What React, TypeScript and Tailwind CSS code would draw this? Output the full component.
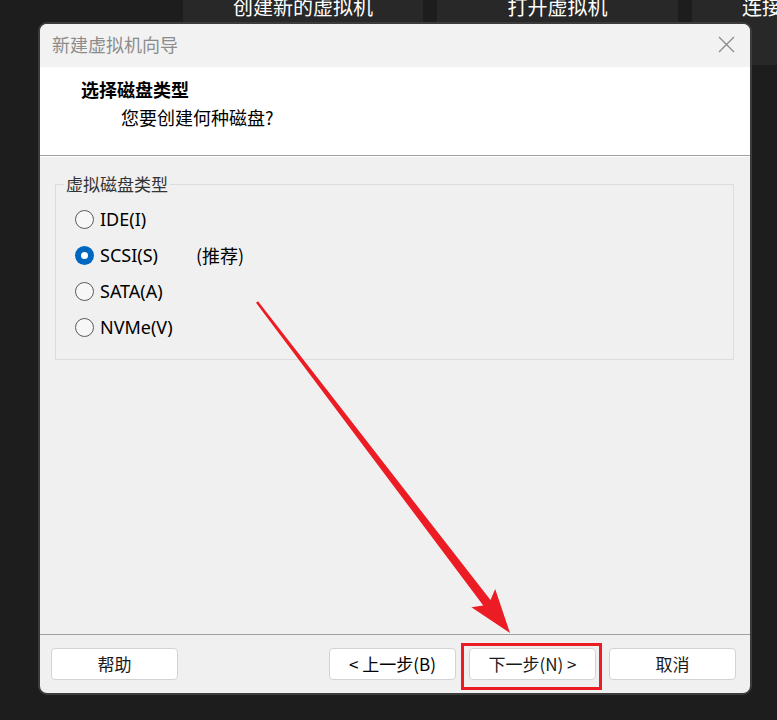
import React from "react";

const cjk = { fontFamily: '"Noto Sans CJK SC", "Noto Sans", sans-serif' };
const ui = { fontFamily: '"Noto Sans", "Noto Sans CJK SC", sans-serif' };

function Radio({ checked, label, extra }: { checked?: boolean; label: string; extra?: string }) {
  return (
    <div className="flex items-center h-[36px]">
      {checked ? (
        <div className="w-[19px] h-[19px] rounded-full bg-[#0067c0] flex items-center justify-center shrink-0">
          <div className="w-[7px] h-[7px] rounded-full bg-white" />
        </div>
      ) : (
        <div className="w-[19px] h-[19px] rounded-full border border-[#5a5a5a] bg-[#f7f7f7] shrink-0" />
      )}
      <span className="ml-[6px] text-[18px] text-black leading-none" style={ui}>{label}</span>
      {extra && (
        <span className="ml-[38px] text-[18px] text-black leading-none" style={cjk}>{extra}</span>
      )}
    </div>
  );
}

function Btn({ children }: { children: React.ReactNode }) {
  return (
    <div
      className="w-[127px] h-[32px] bg-white border border-[#d3d3d3] rounded-[4px] flex items-center justify-center text-[17px] text-[#1a1a1a] shrink-0"
      style={cjk}
    >
      {children}
    </div>
  );
}

export default function App() {
  const sx = 257, sy = 302, ex = 510, ey = 633;
  const dx = ex - sx, dy = ey - sy;
  const len = Math.sqrt(dx * dx + dy * dy);
  const ux = dx / len, uy = dy / len;
  const px = uy, py = -ux;
  const headLen = 44, headW = 15;
  const bx = ex - ux * headLen, by = ey - uy * headLen;
  const shaftEndW = 4.5, shaftStartW = 1.2;
  const pts = [
    [sx + px * shaftStartW, sy + py * shaftStartW],
    [bx + px * shaftEndW + ux * 6, by + py * shaftEndW + uy * 6],
    [bx + px * headW, by + py * headW],
    [ex, ey],
    [bx - px * headW, by - py * headW],
    [bx - px * shaftEndW + ux * 6, by - py * shaftEndW + uy * 6],
    [sx - px * shaftStartW, sy - py * shaftStartW],
  ]
    .map((p) => p.map((v) => v.toFixed(1)).join(","))
    .join(" ");

  return (
    <div className="relative w-[777px] h-[720px] bg-[#1d1d1d] overflow-hidden">
      {/* desktop tiles */}
      <div className="flex h-[65px] pl-[183px] gap-[14px] overflow-hidden">
        <div className="w-[240px] h-full bg-[#282828] flex justify-center shrink-0">
          <span className="text-white text-[20px] leading-[20px] -mt-[3px]" style={cjk}>创建新的虚拟机</span>
        </div>
        <div className="w-[241px] h-full bg-[#282828] flex justify-center shrink-0">
          <span className="text-white text-[20px] leading-[20px] -mt-[3px]" style={cjk}>打开虚拟机</span>
        </div>
        <div className="flex-1 min-w-0 h-full bg-[#282828] pl-[50px] overflow-hidden">
          <span className="text-white text-[20px] leading-[20px] -mt-[3px] block whitespace-nowrap" style={cjk}>连接</span>
        </div>
      </div>

      {/* dialog window */}
      <div className="absolute left-[38px] top-[22px] w-[714px] h-[673px] rounded-[9px] border-2 border-[#3c3c3c] bg-[#f0f0f0] flex flex-col overflow-hidden">
        {/* title bar */}
        <div className="h-[43px] bg-[#f2f2f2] flex items-center justify-between pl-[12px] pr-[15px] shrink-0">
          <span className="text-[18px] text-[#8c8c8c] leading-none -mt-[3px]" style={cjk}>新建虚拟机向导</span>
          <svg width="17" height="17" viewBox="0 0 17 17" className="-mt-[3px]">
            <path d="M1 1 L16 16 M16 1 L1 16" stroke="#8a8a8a" strokeWidth="1.3" fill="none" />
          </svg>
        </div>
        {/* header */}
        <div className="h-[88px] bg-white shrink-0 flex flex-col pl-[41px] pt-[12px]">
          <span className="text-[18px] font-bold text-black leading-[20px]" style={cjk}>选择磁盘类型</span>
          <span className="text-[18px] text-black leading-[20px] mt-[8px] ml-[40px]" style={cjk}>您要创建何种磁盘?</span>
        </div>
        <div className="h-px bg-[#a0a0a0] shrink-0" />
        <div className="h-px bg-white shrink-0" />
        {/* body */}
        <div className="flex-1 pl-[15px] pr-[16px] pt-[27px]">
          <div className="relative h-[176px] border border-[#dcdcdc] pl-[19px] pt-[16px]">
            <span className="absolute left-[8px] -top-[12px] px-[2px] bg-[#f0f0f0] text-[17px] text-[#333] leading-[22px]" style={cjk}>
              虚拟磁盘类型
            </span>
            <Radio label="IDE(I)" />
            <Radio label="SCSI(S)" extra="(推荐)" checked />
            <Radio label="SATA(A)" />
            <Radio label="NVMe(V)" />
          </div>
        </div>
        <div className="h-px bg-[#a0a0a0] shrink-0" />
        {/* footer */}
        <div className="h-[58px] shrink-0 flex items-start pt-[13px] pl-[11px]">
          <Btn>帮助</Btn>
          <div className="ml-[151px] flex gap-[13px]">
            <Btn>
              <span className="text-black">&lt; 上一步(B)</span>
            </Btn>
            <Btn>下一步(N) &gt;</Btn>
            <Btn>取消</Btn>
          </div>
        </div>
      </div>

      {/* annotation: red box */}
      <div className="absolute left-[461px] top-[643px] w-[141px] h-[47px] border-[3px] border-[#ec1c24]" />

      {/* annotation: arrow */}
      <svg className="absolute left-0 top-0" width="777" height="720" viewBox="0 0 777 720">
        <polygon points={pts} fill="#ec1c24" />
      </svg>
    </div>
  );
}
